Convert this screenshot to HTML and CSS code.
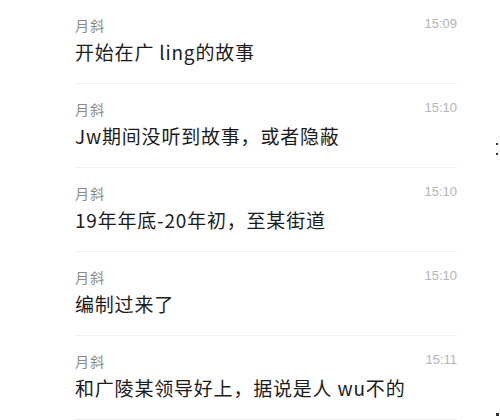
FILE: index.html
```html
<!DOCTYPE html>
<html lang="zh-CN">
<head>
    <meta charset="UTF-8">
    <meta name="viewport" content="width=device-width, initial-scale=1.0">
    <title>聊天记录</title>
    <link rel="stylesheet" href="styles.css">
</head>
<body>
    <ul class="chat-list">
        <li class="chat-item">
            <div class="chat-head"><span class="chat-name">月斜</span><span class="chat-time">15:09</span></div>
            <div class="chat-text">开始在广 ling的故事</div>
        </li>
        <li class="chat-item">
            <div class="chat-head"><span class="chat-name">月斜</span><span class="chat-time">15:10</span></div>
            <div class="chat-text">Jw期间没听到故事，或者隐蔽</div>
        </li>
        <li class="chat-item">
            <div class="chat-head"><span class="chat-name">月斜</span><span class="chat-time">15:10</span></div>
            <div class="chat-text">19年年底-20年初，至某街道</div>
        </li>
        <li class="chat-item">
            <div class="chat-head"><span class="chat-name">月斜</span><span class="chat-time">15:10</span></div>
            <div class="chat-text">编制过来了</div>
        </li>
        <li class="chat-item">
            <div class="chat-head"><span class="chat-name">月斜</span><span class="chat-time">15:11</span></div>
            <div class="chat-text">和广陵某领导好上，据说是人 wu不的</div>
        </li>
    </ul>
    <span class="edge-dot dot-a"></span>
    <span class="edge-dot dot-b"></span>
    <span class="edge-dot dot-c"></span>
</body>
</html>
```

FILE: styles.css
```css
body {
    margin: 0;
    padding: 0;
    background-color: #fff;
    font-family: "Noto Sans CJK SC", "Noto Sans", sans-serif;
    width: 500px;
    height: 420px;
    overflow: hidden;
    position: relative;
}

.chat-list {
    list-style: none;
    margin: 0;
    padding: 0 43px 0 75px;
}

.chat-item {
    padding: 15px 0 18px;
    border-bottom: 1px solid #f0f0f0;
}

.chat-head {
    display: flex;
    justify-content: space-between;
    align-items: center;
    height: 20px;
}

.chat-name {
    font-size: 14px;
    letter-spacing: 1px;
    color: #8a8a8a;
}

.chat-time {
    font-size: 13px;
    color: #b4b4b4;
    font-family: "Liberation Sans", Arial, sans-serif;
    margin-top: -3px;
}

.chat-text {
    margin-top: 4px;
    font-size: 19px;
    line-height: 26px;
    letter-spacing: 0.8px;
    color: #1c1c1c;
}

.edge-dot {
    position: absolute;
    width: 2px;
    height: 2px;
    background-color: #333;
    right: 2px;
}

.dot-a { top: 143px; }
.dot-b { top: 153px; }
.dot-c { top: 413px; width: 3px; height: 3px; right: 1px; }
```
